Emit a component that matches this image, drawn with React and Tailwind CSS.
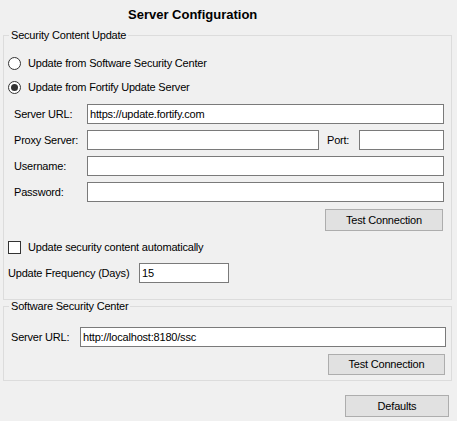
import React from "react";

const Box = ({ className = "", value = "" }) => (
  <div
    className={`h-[20px] border border-[#7a7a7a] bg-white pl-[2px] leading-[18px] ${className}`}
  >
    {value}
  </div>
);

const Button = ({ className = "", children }) => (
  <div
    className={`flex items-center justify-center border border-[#adadad] bg-[#e1e1e1] ${className}`}
  >
    {children}
  </div>
);

const Radio = ({ checked }) => (
  <div className="flex h-[13px] w-[13px] items-center justify-center rounded-full border border-[#333333] bg-white">
    {checked && <div className="h-[7px] w-[7px] rounded-full bg-[#333333]" />}
  </div>
);

export default function App() {
  return (
    <div className="h-[421px] w-[457px] overflow-hidden bg-[#f0f0f0] font-['Liberation_Sans',Arial,sans-serif] text-[11px] leading-[13px] tracking-[-0.2px] text-black">
      {/* title */}
      <div className="h-[29px] pl-[128px] pt-[7px] text-[13px] font-bold leading-[16px] tracking-normal">
        Server Configuration
      </div>

      {/* security content update group */}
      <fieldset className="ml-[3px] w-[449px] border border-[#dcdcdc] p-0 pb-[16px]">
        <legend className="ml-[5px] px-[2px] leading-[13px]">Security Content Update</legend>

        <div className="mt-[14px] ml-[4px] flex h-[14px] items-center gap-[7px]">
          <Radio />
          <span>Update from Software Security Center</span>
        </div>
        <div className="mt-[10px] ml-[4px] flex h-[14px] items-center gap-[7px]">
          <Radio checked />
          <span>Update from Fortify Update Server</span>
        </div>

        <div className="mt-[10px] ml-[10px] flex items-center">
          <span className="w-[73px]">Server URL:</span>
          <Box className="w-[357px]" value="https://update.fortify.com" />
        </div>
        <div className="mt-[6px] ml-[10px] flex items-center">
          <span className="w-[73px]">Proxy Server:</span>
          <Box className="w-[232px]" />
          <span className="ml-[8px] w-[32px]">Port:</span>
          <Box className="w-[85px]" />
        </div>
        <div className="mt-[6px] ml-[10px] flex items-center">
          <span className="w-[73px]">Username:</span>
          <Box className="w-[357px]" />
        </div>
        <div className="mt-[6px] ml-[10px] flex items-center">
          <span className="w-[73px]">Password:</span>
          <Box className="w-[357px]" />
        </div>

        <Button className="mt-[7px] ml-[321px] h-[22px] w-[118px]">Test Connection</Button>

        <div className="mt-[10px] ml-[4px] flex h-[13px] items-center gap-[7px]">
          <div className="h-[13px] w-[13px] border border-[#333333] bg-white" />
          <span>Update security content automatically</span>
        </div>
        <div className="mt-[9px] ml-[4px] flex items-center">
          <span className="w-[131px]">Update Frequency (Days)</span>
          <Box className="w-[90px]" value="15" />
        </div>
      </fieldset>

      {/* software security center group */}
      <fieldset className="ml-[3px] w-[449px] border border-[#dcdcdc] p-0 pb-[5px]">
        <legend className="ml-[5px] px-[2px] leading-[13px]">Software Security Center</legend>
        <div className="mt-[14px] ml-[7px] flex items-center">
          <span className="w-[69px]">Server URL:</span>
          <Box className="w-[366px]" value="http://localhost:8180/ssc" />
        </div>
        <Button className="mt-[7px] ml-[324px] h-[21px] w-[117px]">Test Connection</Button>
      </fieldset>

      <Button className="mt-[14px] ml-[345px] h-[22px] w-[104px]">Defaults</Button>
    </div>
  );
}
